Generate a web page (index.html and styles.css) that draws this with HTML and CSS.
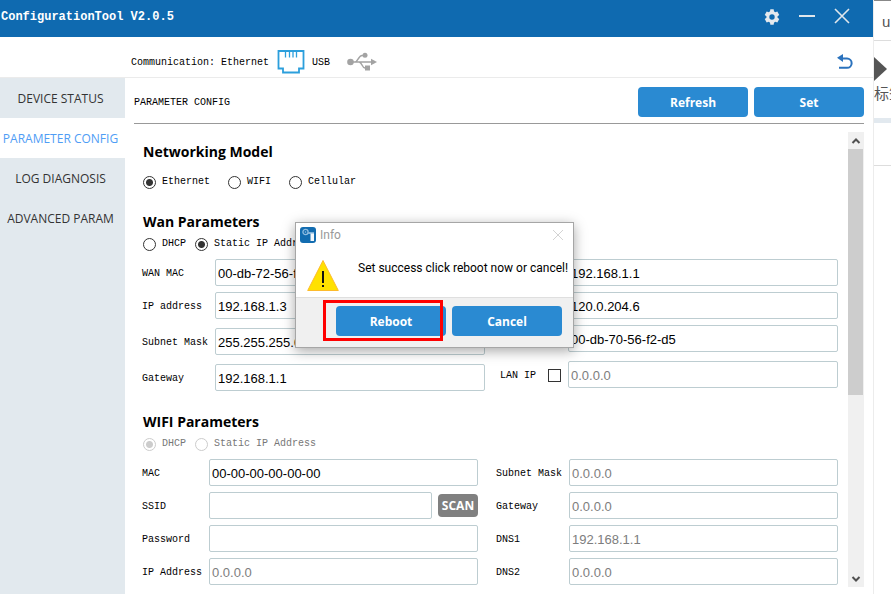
FILE: index.html
```html
<!DOCTYPE html>
<html lang="en">
<head>
<meta charset="utf-8">
<title>ConfigurationTool</title>
<link rel="stylesheet" href="styles.css">
</head>
<body>
<div class="app">
  <header class="titlebar">
    <h1 class="app-title">ConfigurationTool V2.0.5</h1>
    <div class="window-actions">
      <button type="button" class="icon-button" aria-label="Settings">
        <svg width="18" height="18" viewBox="0 0 24 24"><path fill="#e4e9ee" d="M19.4 13a7.500 7.500 0 0 0 0-2l2.300-1.800-2.600-4.500-2.700 1.100a7.500 7.500 0 0 0-1.700-1L14.200 1.500H9.800L9.300 4.800a7.500 7.500 0 0 0-1.700 1L4.900 4.700 2.300 9.200 4.600 11a7.500 7.500 0 0 0 0 2l-2.300 1.800 2.600 4.500 2.700-1.100a7.500 7.500 0 0 0 1.700 1l.5 3.300h4.400l.5-3.300a7.500 7.500 0 0 0 1.700-1l2.700 1.100 2.600-4.500zM12 15.600a3.600 3.600 0 1 1 0-7.200 3.600 3.600 0 0 1 0 7.200z"/></svg>
      </button>
      <button type="button" class="icon-button" aria-label="Minimize">
        <svg width="18" height="18" viewBox="0 0 18 18"><path stroke="#dfe6ec" stroke-width="2" d="M1 8h16"/></svg>
      </button>
      <button type="button" class="icon-button" aria-label="Close">
        <svg width="18" height="18" viewBox="0 0 18 18"><path stroke="#dfe6ec" stroke-width="1.600" d="M2 1l14 14M16 1L2 15"/></svg>
      </button>
    </div>
  </header>

  <div class="comm">
    <span>Communication: Ethernet</span>
    <svg class="port" width="28" height="26" viewBox="0 0 28 26"><path fill="none" stroke="#2c9fdc" stroke-width="1.800" d="M1.500 2h25v17.500h-4.500v4H6v-4H1.500z"/><path stroke="#2c9fdc" stroke-width="1.300" d="M8.500 2v6.500M12.500 2v6.500M16 2v6.500M19.500 2v6.500"/></svg>
    <span>USB</span>
    <svg class="usb" width="30" height="20" viewBox="0 0 30 20"><g fill="#a3a3a3"><circle cx="3.500" cy="10" r="3.300"/><circle cx="18" cy="3.200" r="2.500"/><path d="M24 6.800l6 3.200-6 3.200z"/><path d="M18 13.500h5v5h-5z"/></g><path fill="none" stroke="#a3a3a3" stroke-width="1.500" d="M4 10h21M8 10c3 0 3.500-6.500 7-6.500h2M12 10c3 0 3 6 6 6h1"/></svg>
    <button type="button" class="icon-button back" aria-label="Back">
      <svg width="16" height="16" viewBox="0 0 16 16"><path fill="none" stroke="#2a72bd" stroke-width="2" d="M5 4.500h5a4.600 4.600 0 0 1 0 9.300H2"/><path fill="#2a72bd" d="M6 0v8L0 3.800z"/></svg>
    </button>
  </div>

  <div class="workspace">
    <nav class="sidebar">
      <a href="#status">DEVICE STATUS</a>
      <a href="#config" class="active">PARAMETER CONFIG</a>
      <a href="#log">LOG DIAGNOSIS</a>
      <a href="#advanced">ADVANCED PARAM</a>
    </nav>

    <main class="content">
      <div class="page-head">
        <h2 class="page-title">PARAMETER CONFIG</h2>
        <button type="button" class="primary">Refresh</button>
        <button type="button" class="primary">Set</button>
      </div>

      <div class="scroll-area">
        <form class="form">
          <section>
            <h3>Networking Model</h3>
            <div class="choices wide">
              <label><input type="radio" name="model" checked>Ethernet</label>
              <label><input type="radio" name="model">WIFI</label>
              <label><input type="radio" name="model">Cellular</label>
            </div>
          </section>

          <section class="wan">
            <h3>Wan Parameters</h3>
            <div class="choices">
              <label><input type="radio" name="wan">DHCP</label>
              <label><input type="radio" name="wan" checked>Static IP Address</label>
            </div>
            <div class="columns">
              <div class="column">
                <div class="field"><label for="wan-mac">WAN MAC</label><input id="wan-mac" type="text" value="00-db-72-56-f2-d5"></div>
                <div class="field"><label for="wan-ip">IP address</label><input id="wan-ip" type="text" value="192.168.1.3"></div>
                <div class="field spaced"><label for="wan-mask">Subnet Mask</label><input id="wan-mask" type="text" value="255.255.255.0"></div>
                <div class="field spaced"><label for="wan-gw">Gateway</label><input id="wan-gw" type="text" value="192.168.1.1"></div>
              </div>
              <div class="column">
                <div class="field"><label for="wan-dns1">DNS1</label><input id="wan-dns1" type="text" value="192.168.1.1"></div>
                <div class="field"><label for="wan-dns2">DNS2</label><input id="wan-dns2" type="text" value="120.0.204.6"></div>
                <div class="field"><label for="lan-mac">LAN MAC</label><input id="lan-mac" type="text" value="00-db-70-56-f2-d5"></div>
                <div class="field spaced"><label for="lan-on">LAN IP<input id="lan-on" type="checkbox"></label><input type="text" aria-label="LAN IP" value="0.0.0.0" disabled></div>
              </div>
            </div>
          </section>

          <section class="wifi">
            <h3>WIFI Parameters</h3>
            <div class="choices muted">
              <label><input type="radio" name="wifi" checked disabled>DHCP</label>
              <label><input type="radio" name="wifi" disabled>Static IP Address</label>
            </div>
            <div class="columns">
              <div class="column">
                <div class="field"><label for="wifi-mac">MAC</label><input id="wifi-mac" type="text" value="00-00-00-00-00-00"></div>
                <div class="field"><label for="ssid">SSID</label><input id="ssid" type="text"><button type="button" class="scan">SCAN</button></div>
                <div class="field"><label for="password">Password</label><input id="password" type="password"></div>
                <div class="field"><label for="wifi-ip">IP Address</label><input id="wifi-ip" type="text" value="0.0.0.0" disabled></div>
              </div>
              <div class="column">
                <div class="field"><label for="wifi-mask">Subnet Mask</label><input id="wifi-mask" type="text" value="0.0.0.0" disabled></div>
                <div class="field"><label for="wifi-gw">Gateway</label><input id="wifi-gw" type="text" value="0.0.0.0" disabled></div>
                <div class="field"><label for="wifi-dns1">DNS1</label><input id="wifi-dns1" type="text" value="192.168.1.1" disabled></div>
                <div class="field"><label for="wifi-dns2">DNS2</label><input id="wifi-dns2" type="text" value="0.0.0.0" disabled></div>
              </div>
            </div>
          </section>
        </form>
        <div class="scrollbar" aria-hidden="true">
          <svg width="16" height="17" viewBox="0 0 16 17"><path fill="none" stroke="#505050" stroke-width="2" d="M4.500 11l3.500-3.500 3.500 3.500"/></svg>
          <div class="thumb"></div>
          <svg width="16" height="17" viewBox="0 0 16 17"><path fill="none" stroke="#505050" stroke-width="2" d="M4.500 7l3.500 3.500 3.500-3.500"/></svg>
        </div>
      </div>
    </main>
  </div>

  <div class="dialog" role="dialog" aria-labelledby="dialog-title">
    <div class="dialog-head">
      <svg width="16" height="16" viewBox="0 0 16 16"><rect width="16" height="16" rx="3" fill="#126cb0"/><circle cx="5.500" cy="5" r="2.600" fill="none" stroke="#8fbce0" stroke-width="1.300"/><circle cx="5.500" cy="5" r=".8" fill="#8fbce0"/><path fill="#7fb1d9" d="M8 5h6v3h-3v-1H8z"/><path fill="#f3f8fc" d="M10.500 6.500H14V14h-3.500z"/></svg>
      <span id="dialog-title">Info</span>
      <button type="button" class="icon-button" aria-label="Close">
        <svg width="12" height="12" viewBox="0 0 12 12"><path stroke="#d3d3d3" d="M1 1l10 10M11 1L1 11"/></svg>
      </button>
    </div>
    <div class="dialog-body">
      <svg width="32" height="32" viewBox="0 0 32 32"><path fill="#ffe100" stroke="#fdbb2c" d="M16 1.500L31.300 31.500H.7z"/><path fill="#111" d="M15 12h2v12h-2zM15 26h2v2h-2z"/></svg>
      <p>Set success click reboot now or cancel!</p>
    </div>
    <div class="dialog-foot">
      <button type="button" class="primary marked">Reboot</button>
      <button type="button" class="primary">Cancel</button>
    </div>
  </div>
</div>

<aside class="behind">
  <div class="behind-tab">u</div>
  <div class="behind-tool">
    <svg width="13" height="24" viewBox="0 0 13 24"><path fill="#555" d="M0 0l13 12L0 24z"/></svg>
    <span>标签</span>
  </div>
  <div class="behind-row"></div>
</aside>
</body>
</html>
```
FILE: styles.css
```css
* {
  box-sizing: border-box;
}

body {
  display: flex;
  height: 100vh;
  margin: 0;
  overflow: hidden;
  background: #fff;
  color: #000;
  font: 10px/18px "Liberation Mono", monospace;
}

h1, h2, h3, p {
  margin: 0;
}

svg {
  display: block;
  flex: none;
}

button {
  border: 0;
  padding: 0;
}

.icon-button {
  background: none;
}

/* Window frame */
.app {
  position: relative;
  display: flex;
  flex: 1;
  flex-direction: column;
  min-width: 0;
  border-right: 1px solid #ececec;
}

.titlebar {
  display: flex;
  flex: none;
  justify-content: space-between;
  height: 37px;
  padding: 8px 22px 0 1px;
  background: #0f6ab0;
  color: #fff;
}

.app-title {
  font: bold 12px/18px "Liberation Mono", monospace;
}

.window-actions {
  display: flex;
  align-items: flex-start;
  gap: 17px;
}

.comm {
  display: flex;
  flex: none;
  align-items: center;
  height: 41px;
  padding: 9px 20px 0 131px;
  border-bottom: 1px solid #ebebeb;
}

.comm span {
  padding-top: 2px;
}

.port {
  margin: 0 7px 0 8px;
}

.usb {
  margin-left: 17px;
}

.back {
  margin-left: auto;
}

.workspace {
  display: flex;
  flex: 1;
  min-height: 0;
}

.sidebar {
  flex: none;
  width: 125px;
  background: #e2e9ee;
}

.sidebar a {
  display: block;
  height: 40px;
  padding-right: 4px;
  color: #333;
  font: 12px/42px "Open Sans", sans-serif;
  text-align: center;
  text-decoration: none;
  white-space: nowrap;
}

.sidebar .active {
  background: #fff;
  color: #4f9df5;
}

.content {
  display: flex;
  flex: 1;
  flex-direction: column;
  min-width: 0;
  padding: 0 9px 7px;
}

.page-head {
  display: flex;
  flex: none;
  align-items: center;
  gap: 6px;
  height: 46px;
  margin-bottom: 8px;
  padding-top: 2px;
  border-bottom: 1px solid #999;
}

.page-title {
  flex: 1;
  padding-top: 2px;
  font: 10px/18px "Liberation Mono", monospace;
}

.primary {
  width: 110px;
  height: 30px;
  padding-top: 2px;
  border-radius: 4px;
  background: #2a8ad2;
  color: #fff;
  font: bold 12px/16px "Open Sans", sans-serif;
}

.scroll-area {
  display: flex;
  flex: 1;
  min-height: 0;
}

.form {
  flex: 1;
  min-width: 0;
  padding: 9px 10px 0 8px;
  overflow: hidden;
}

.form h3 {
  padding-left: 1px;
  font: bold 14px/22px "Open Sans", sans-serif;
}

/* Radio rows */
.choices {
  display: flex;
  gap: 9px;
  margin: 2px 0 6px;
  padding-left: 1px;
}

.choices.wide {
  gap: 18px;
  margin: 10px 0 20px;
}

.choices label {
  display: flex;
  align-items: center;
  gap: 6px;
}

.muted {
  color: #777;
}

input[type="radio"] {
  appearance: none;
  width: 13px;
  height: 13px;
  margin: 0;
  border: 1px solid #333;
  border-radius: 50%;
  background: #fff;
}

input[type="radio"]:checked {
  background: radial-gradient(circle, #333 0 3px, #fff 4px);
}

input[type="radio"]:disabled {
  border-color: #ccc;
}

input[type="radio"]:disabled:checked {
  background: radial-gradient(circle, #ccc 0 3px, #fff 4px);
}

/* Field columns: each basis is its label width, so the inputs stay equal */
.columns {
  display: flex;
}

.column {
  display: flex;
  flex: 1 1 73px;
  flex-direction: column;
  gap: 6px;
  min-width: 0;
}

.wan .columns {
  gap: 15px;
}

.wan .column + .column {
  flex-basis: 68px;
}

.wifi {
  margin-top: 20px;
}

.wifi .columns {
  gap: 18px;
}

.wifi .column {
  flex-basis: 67px;
}

.wifi .column + .column {
  flex-basis: 73px;
}

.field {
  display: flex;
  align-items: center;
}

.field.spaced {
  margin-top: 3px;
}

.field > label {
  display: flex;
  flex: none;
  align-items: center;
  gap: 12px;
  width: 73px;
  padding-top: 2px;
  white-space: nowrap;
}

.wan .column + .column label {
  width: 68px;
}

.wifi .field > label {
  width: 67px;
}

.wifi .column + .column label {
  width: 73px;
}

.field input[type="text"],
.field input[type="password"] {
  flex: 1;
  min-width: 0;
  height: 27px;
  padding: 2px 2px 0;
  border: 1px solid #bdcdd1;
  border-radius: 2px;
  background: #fff;
  color: #000;
  font: 13px/16px "Liberation Sans", sans-serif;
}

.field input[type="text"]:disabled {
  color: #7d7d7d;
}

input[type="checkbox"] {
  appearance: none;
  width: 13px;
  height: 13px;
  margin: 0;
  border: 1px solid #333;
  background: #fff;
}

.scan {
  width: 40px;
  height: 23px;
  margin-left: 6px;
  border-radius: 4px;
  background: #808080;
  color: #fff;
  font: bold 12px/16px "Open Sans", sans-serif;
}

.scrollbar {
  display: flex;
  flex: none;
  flex-direction: column;
  justify-content: space-between;
  width: 16px;
  background: #f0f0f0;
}

.thumb {
  flex: none;
  width: 15px;
  height: 54%;
  margin-bottom: auto;
  background: #cdcdcd;
}

/* Message box */
.dialog {
  position: absolute;
  top: 222px;
  left: 295px;
  width: 279px;
  border: 1px solid #a6a6a6;
  background: #fff;
  box-shadow: 0 3px 12px rgba(0, 0, 0, 0.35);
  font: 12px/18px Roboto, sans-serif;
}

.dialog-head {
  display: flex;
  align-items: center;
  gap: 4px;
  height: 24px;
  padding: 0 9px 0 4px;
  color: #999;
}

.dialog-head button {
  margin-left: auto;
}

.dialog-body {
  display: flex;
  gap: 19px;
  height: 50px;
  padding: 12px 10px 0 11px;
  white-space: nowrap;
}

.dialog-foot {
  display: flex;
  justify-content: flex-end;
  gap: 6px;
  padding: 8px 11px 11px;
  border-top: 1px solid #dfdfdf;
  background: #f0f0f0;
}

.marked {
  position: relative;
}

.marked::after {
  position: absolute;
  inset: -6px 3px -5px -13px;
  border: 3px solid #f00;
  content: "";
}

/* Window showing behind the tool */
.behind {
  flex: none;
  width: 17px;
  overflow: hidden;
  border-top: 1px solid #888;
  color: #555;
  font: 15px/20px "Liberation Sans", "Noto Sans CJK SC", sans-serif;
  white-space: nowrap;
}

.behind-tab {
  height: 40px;
  padding: 11px 0 0 8px;
  border-bottom: 1px solid #ddd;
}

.behind-tool {
  height: 82px;
  padding-top: 16px;
  border-bottom: 5px solid #e2e9ef;
}

.behind-tool span {
  display: block;
  padding-top: 3px;
}

.behind-row {
  height: 43px;
  border-bottom: 1px solid #ddd;
}
```
